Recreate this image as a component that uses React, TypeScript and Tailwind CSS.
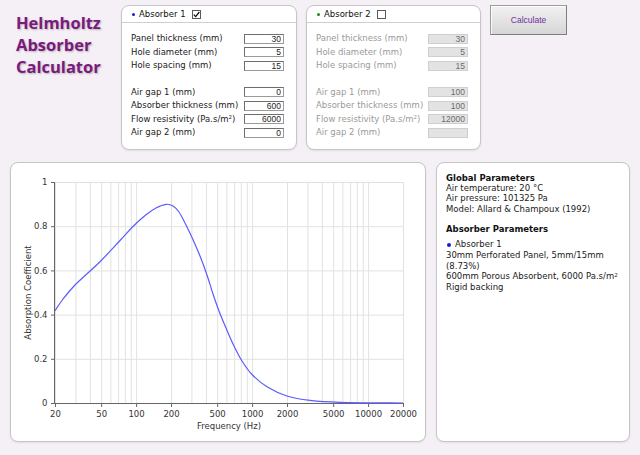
import React from 'react';

type RowDef = { label: React.ReactNode; value: string } | null;

const rows1: RowDef[] = [
  { label: 'Panel thickness (mm)', value: '30' },
  { label: 'Hole diameter (mm)', value: '5' },
  { label: 'Hole spacing (mm)', value: '15' },
  null,
  { label: 'Air gap 1 (mm)', value: '0' },
  { label: 'Absorber thickness (mm)', value: '600' },
  {
    label: (
      <>
        Flow resistivity (Pa.s/m<sup className="text-[5.5px]">2</sup>)
      </>
    ),
    value: '6000',
  },
  { label: 'Air gap 2 (mm)', value: '0' },
];

const rows2: RowDef[] = [
  { label: 'Panel thickness (mm)', value: '30' },
  { label: 'Hole diameter (mm)', value: '5' },
  { label: 'Hole spacing (mm)', value: '15' },
  null,
  { label: 'Air gap 1 (mm)', value: '100' },
  { label: 'Absorber thickness (mm)', value: '100' },
  {
    label: (
      <>
        Flow resistivity (Pa.s/m<sup className="text-[5.5px]">2</sup>)
      </>
    ),
    value: '12000',
  },
  { label: 'Air gap 2 (mm)', value: '' },
];

function Checkbox({ checked }: { checked: boolean }) {
  return (
    <span className="ml-[6px] inline-flex h-[9px] w-[9px] items-center justify-center border border-[#5a5a5a] bg-white">
      {checked && (
        <svg width="7" height="7" viewBox="0 0 7 7">
          <path d="M0.8 3.6 L2.7 5.6 L6.3 1" fill="none" stroke="#111" strokeWidth="1.3" />
        </svg>
      )}
    </span>
  );
}

function Panel({
  title,
  dot,
  checked,
  rows,
  disabled,
  width,
}: {
  title: string;
  dot: string;
  checked: boolean;
  rows: RowDef[];
  disabled: boolean;
  width: string;
}) {
  return (
    <div
      className={`${width} h-[145px] rounded-[8px] border border-[#c6c6c6] bg-white shadow-[0_1px_2px_rgba(0,0,0,0.08)] font-['DejaVu_Sans',Verdana,sans-serif] text-[8.5px]`}
    >
      <div className="flex h-[17px] items-center border-b border-[#cfcfcf] pl-[10px] pt-[1px] text-[#111]">
        <span className={`mr-[4px] inline-block h-[3px] w-[3px] rounded-full ${dot}`} />
        <span>{title}</span>
        <Checkbox checked={checked} />
      </div>
      <div className="pl-[9px] pr-[12px] pt-[9px]">
        {rows.map((r, i) =>
          r === null ? (
            <div key={i} className="h-[13.43px]" />
          ) : (
            <div key={i} className="flex h-[13.43px] items-center justify-between">
              <span className={disabled ? 'text-[#9a9a9a]' : 'text-[#222]'}>{r.label}</span>
              <input
                readOnly
                disabled={disabled}
                defaultValue={r.value}
                className={
                  disabled
                    ? "h-[10px] w-[40px] border border-[#cfcfcf] bg-[#e3e3e3] p-0 pr-[2px] text-right font-['Liberation_Sans',Arial,sans-serif] text-[8.5px] leading-[8px] text-[#6a6a6a] outline-none"
                    : "h-[10px] w-[40px] border border-[#9a9a9a] border-l-[#6e6e6e] border-t-[#6e6e6e] bg-white p-0 pr-[2px] text-right font-['Liberation_Sans',Arial,sans-serif] text-[8.5px] leading-[8px] text-[#222] outline-none"
                }
              />
            </div>
          )
        )}
      </div>
    </div>
  );
}

const X0 = 55;
const X1 = 403;
const Y0 = 403;
const Y1 = 182;
const fx = (f: number) => X0 + 116 * Math.log10(f / 20);
const fy = (v: number) => Y0 - (Y0 - Y1) * v;

const gridFreqs: number[] = [];
for (let f = 20; f <= 100; f += 10) gridFreqs.push(f);
for (let f = 200; f <= 1000; f += 100) gridFreqs.push(f);
for (let f = 2000; f <= 10000; f += 1000) gridFreqs.push(f);
gridFreqs.push(20000);

const labelFreqs = [20, 50, 100, 200, 500, 1000, 2000, 5000, 10000, 20000];

const pts: [number, number][] = [
  [55, 310.7],
  [62, 300.5],
  [75, 285],
  [100, 261.7],
  [120, 240.5],
  [133, 226.5],
  [146, 214.8],
  [156, 208],
  [166, 204.3],
  [173, 206],
  [179, 212],
  [185, 223],
  [192, 237.5],
  [200, 256],
  [207, 275],
  [213, 294],
  [219, 311],
  [226, 328],
  [234, 346],
  [242, 361],
  [252, 374.5],
  [267, 386.7],
  [287, 396],
  [310, 400.4],
  [340, 402.3],
  [403, 403],
];

function curvePath() {
  let d = `M${pts[0][0]},${pts[0][1]}`;
  for (let i = 0; i < pts.length - 1; i++) {
    const p0 = pts[i - 1] || pts[i];
    const p1 = pts[i];
    const p2 = pts[i + 1];
    const p3 = pts[i + 2] || p2;
    const c1x = p1[0] + (p2[0] - p0[0]) / 6;
    const c1y = p1[1] + (p2[1] - p0[1]) / 6;
    const c2x = p2[0] - (p3[0] - p1[0]) / 6;
    const c2y = p2[1] - (p3[1] - p1[1]) / 6;
    d += ` C${c1x.toFixed(2)},${c1y.toFixed(2)} ${c2x.toFixed(2)},${c2y.toFixed(2)} ${p2[0]},${p2[1]}`;
  }
  return d;
}

function Chart() {
  const font = '"DejaVu Sans", Verdana, sans-serif';
  return (
    <svg width="414" height="278" viewBox="11 163 414 278" className="block">
      {gridFreqs.map((f) => (
        <line key={f} x1={fx(f) + 0.5} x2={fx(f) + 0.5} y1={Y1} y2={Y0} stroke="#e2e2e2" strokeWidth="1" />
      ))}
      {[0.2, 0.4, 0.6, 0.8, 1].map((v) => (
        <line key={v} x1={X0} x2={X1 + 0.5} y1={fy(v) + 0.5} y2={fy(v) + 0.5} stroke="#e2e2e2" strokeWidth="1" />
      ))}
      <line x1={X0 - 0.5} x2={X0 - 0.5} y1={Y1} y2={Y0 + 1} stroke="#666" strokeWidth="1" />
      <line x1={X0 - 1} x2={X1 + 1} y1={Y0 + 0.5} y2={Y0 + 0.5} stroke="#666" strokeWidth="1" />
      {[0, 0.2, 0.4, 0.6, 0.8, 1].map((v) => (
        <line key={'t' + v} x1={X0 - 4} x2={X0} y1={fy(v) + 0.5} y2={fy(v) + 0.5} stroke="#666" strokeWidth="1" />
      ))}
      {labelFreqs.map((f) => (
        <line key={'tx' + f} x1={fx(f) + 0.5} x2={fx(f) + 0.5} y1={Y0} y2={Y0 + 4} stroke="#666" strokeWidth="1" />
      ))}
      <path d={curvePath()} fill="none" stroke="#5b5bff" strokeWidth="1.2" />
      {[
        [0, '0'],
        [0.2, '0.2'],
        [0.4, '0.4'],
        [0.6, '0.6'],
        [0.8, '0.8'],
        [1, '1'],
      ].map(([v, s]) => (
        <text
          key={'yl' + s}
          x={47.5}
          y={fy(v as number) + 3.2}
          textAnchor="end"
          fontFamily={font}
          fontSize="8.5"
          fill="#333"
        >
          {s}
        </text>
      ))}
      {labelFreqs.map((f) => (
        <text key={'xl' + f} x={fx(f) + 0.5} y={416.8} textAnchor="middle" fontFamily={font} fontSize="8.5" fill="#333">
          {f}
        </text>
      ))}
      <text x={229} y={429.3} textAnchor="middle" fontFamily={font} fontSize="8.5" fill="#333">
        Frequency (Hz)
      </text>
      <text
        transform="translate(31.3,292.5) rotate(-90)"
        textAnchor="middle"
        fontFamily={font}
        fontSize="8.5"
        fill="#333"
      >
        Absorption Coefficient
      </text>
    </svg>
  );
}

export default function App() {
  return (
    <div className="h-[455px] w-[640px] overflow-hidden bg-[#f4f0f5] pt-[5px]">
      <div className="flex h-[145px] items-start">
        <div className="w-[121px] pl-[16px] pt-[7px] font-['Open_Sans',Tahoma,sans-serif] text-[16.5px] font-bold leading-[22px] text-[#7a1a7e] [text-shadow:1px_1px_2px_rgba(0,0,0,0.25)]">
          <div>Helmholtz</div>
          <div>Absorber</div>
          <div>Calculator</div>
        </div>
        <Panel title="Absorber 1" dot="bg-[#1a1ae6]" checked rows={rows1} disabled={false} width="w-[176px]" />
        <div className="w-[9px]" />
        <Panel title="Absorber 2" dot="bg-[#1a8a1a]" checked={false} rows={rows2} disabled width="w-[175px]" />
        <div className="w-[9px]" />
        <button className="h-[30px] w-[77px] border border-[#9c9c9c] border-b-[#7e7e7e] border-r-[#7e7e7e] bg-gradient-to-b from-[#f2f2f2] to-[#d6d6d6] font-['Liberation_Sans',Arial,sans-serif] text-[8.5px] text-[#7030a0] shadow-[inset_1px_1px_0_rgba(255,255,255,0.8)]">
          Calculate
        </button>
      </div>
      <div className="mt-[12px] flex gap-[10px] px-[10px]">
        <div className="h-[280px] w-[416px] rounded-[8px] border border-[#c6c6c6] bg-white shadow-[0_1px_2px_rgba(0,0,0,0.08)]">
          <Chart />
        </div>
        <div className="h-[280px] w-[196px] rounded-[8px] border border-[#c6c6c6] bg-white pl-[9px] pr-[8px] pt-[10px] font-['DejaVu_Sans',Verdana,sans-serif] text-[8.5px] leading-[10.2px] text-[#1a1a1a] shadow-[0_1px_2px_rgba(0,0,0,0.08)]">
          <div className="font-bold text-[#111]">Global Parameters</div>
          <div>Air temperature: 20 °C</div>
          <div>Air pressure: 101325 Pa</div>
          <div>Model: Allard &amp; Champoux (1992)</div>
          <div className="mt-[10.2px] font-bold text-[#111]">Absorber Parameters</div>
          <div className="mt-[5px] flex items-center leading-[10.7px]">
            <span className="mr-[4px] ml-[1px] inline-block h-[4px] w-[4px] rounded-full bg-[#1a1ae6]" />
            Absorber 1
          </div>
          <div className="leading-[10.7px]">
            30mm Perforated Panel, 5mm/15mm (8.73%)
          </div>
          <div className="leading-[10.7px]">
            600mm Porous Absorbent, 6000 Pa.s/m<sup className="text-[5.5px]">2</sup>
          </div>
          <div className="leading-[10.7px]">Rigid backing</div>
        </div>
      </div>
    </div>
  );
}
